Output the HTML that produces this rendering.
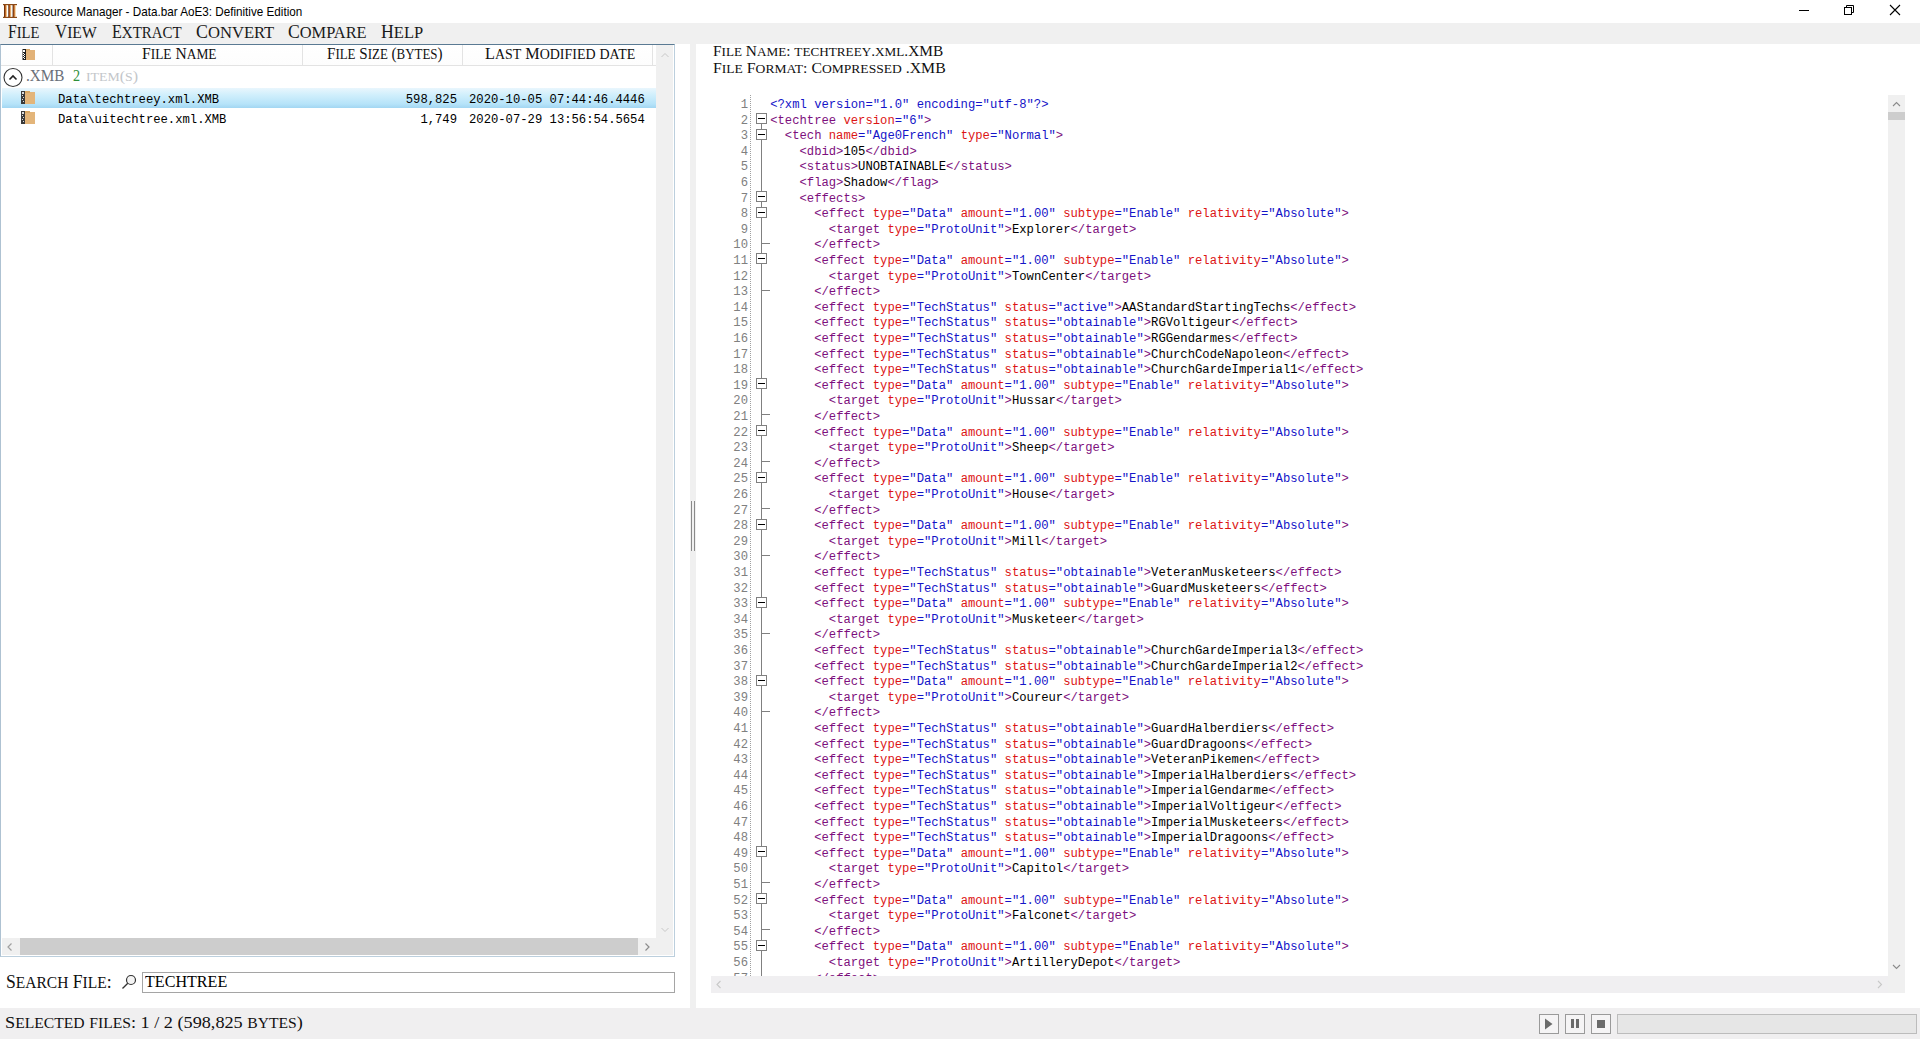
<!DOCTYPE html>
<html><head><meta charset="utf-8">
<style>
*{box-sizing:border-box}
html,body{margin:0;padding:0;width:1920px;height:1039px;overflow:hidden;background:#fff;position:relative}
.a{position:absolute}
.sc{font-family:"Liberation Serif",serif;font-variant:small-caps;color:#141414;white-space:nowrap}
.lb{white-space:nowrap;line-height:1;transform-origin:0 0}
.mono{font-family:"Liberation Mono",monospace;white-space:pre}
#title{left:23px;top:2px;font-family:"Liberation Sans",sans-serif;font-size:12px;line-height:18px;color:#000;white-space:nowrap}
#menu{left:0;top:23px;width:1920px;height:21px;background:#f0f0f0}
.mi{position:absolute;top:0;font-size:17px;line-height:22px}
#lv{left:0;top:44px;width:675px;height:913px;border:1px solid #bccfdd;border-left-color:#aec2d2;border-top-color:#5a7a93;background:#fff}
.hd{position:absolute;top:0;height:21px;border-bottom:1px solid #e3e3e3}
.hdiv{position:absolute;top:0;width:1px;height:20px;background:#e3e3e3}
.ht{position:absolute;top:0;font-size:15px;line-height:20px;text-align:center}
.sb{background:#f0f0f0}
.row{position:absolute;left:1px;width:654px;height:20px}
.rt{position:absolute;top:0;font-size:12.21px;line-height:20px;color:#000}
#editor{left:711px;top:95px;width:1177px;height:881px;overflow:hidden}
.cl{position:absolute;left:0;font-family:"Liberation Mono",monospace;font-size:12.21px;line-height:15.636px;white-space:pre;height:15.636px}
.ln{position:absolute;left:0;width:37px;text-align:right;font-family:"Liberation Mono",monospace;font-size:12.21px;line-height:15.636px;color:#808080;height:15.636px}
</style></head><body>
<!-- title bar -->
<svg class="a" style="left:3px;top:4px" width="14" height="14" viewBox="0 0 14 14">
 <defs><linearGradient id="g1" x1="0" x2="1"><stop offset="0" stop-color="#4a1e04"/><stop offset="0.45" stop-color="#b85a18"/><stop offset="0.75" stop-color="#e8b070"/><stop offset="1" stop-color="#f6e0b8"/></linearGradient></defs>
 <rect x="0" y="0" width="14" height="1.2" fill="#8a4a18"/>
 <rect x="0" y="12.8" width="14" height="1.2" fill="#8a4a18"/>
 <rect x="1" y="1" width="3" height="12" fill="url(#g1)"/>
 <rect x="5.3" y="1" width="3" height="12" fill="url(#g1)"/>
 <rect x="9.6" y="1" width="3.2" height="12" fill="url(#g1)"/>
</svg>
<svg class="a" style="left:1790px;top:0" width="130" height="22">
 <rect x="9" y="10" width="10" height="1" fill="#000"/>
 <rect x="54.5" y="7.5" width="7" height="7" fill="none" stroke="#000"/>
 <path d="M56.5 7.5V5.5H63.5V12.5H61.5" fill="none" stroke="#000"/>
 <path d="M100 5L110 15M110 5L100 15" stroke="#000" stroke-width="1.1"/>
</svg>
<!-- menu -->
<div id="menu" class="a">
</div>
<!-- list view -->
<div id="lv" class="a">
 <div class="hd" style="left:0;width:655px;background:linear-gradient(#fff,#fdfdfd)"></div>
 <div class="hdiv" style="left:51px"></div>
 <div class="hdiv" style="left:301px"></div>
 <div class="hdiv" style="left:461px"></div>
 <div class="hdiv" style="left:651px"></div>
 <svg class="a" style="left:21px;top:4px" width="13" height="12" viewBox="0 0 13 12">
  <rect x="4" y="1" width="9" height="10" fill="#e2b278"/>
  <rect x="4" y="0" width="4" height="1.5" fill="#d8a868"/>
  <rect x="0.5" y="0" width="3.5" height="11" fill="#1e1e1e"/>
  <rect x="1" y="1" width="2" height="2" fill="#fff"/>
  <rect x="1" y="4" width="1" height="1" fill="#fff"/><rect x="2" y="5" width="1" height="1" fill="#fff"/>
  <rect x="1" y="6" width="1" height="1" fill="#fff"/><rect x="2" y="7" width="1" height="1" fill="#fff"/>
  <rect x="1" y="8" width="1" height="1" fill="#fff"/><rect x="2" y="9" width="1" height="1" fill="#fff"/>
 </svg>
 <!-- group -->
 <svg class="a" style="left:2px;top:22px" width="22" height="22" viewBox="0 0 22 22">
  <circle cx="10" cy="10.5" r="9" fill="none" stroke="#333" stroke-width="1.1"/>
  <path d="M6.5 12.5L10 9L13.5 12.5" fill="none" stroke="#222" stroke-width="1.6"/>
 </svg>
 <!-- rows -->
 <div class="row" style="top:43px;background:linear-gradient(#e9f6fd,#d0effc 35%,#b6e3f9 80%,#a2d6f2)"></div>
 <svg class="a" style="left:19px;top:46px" width="16" height="14" viewBox="0 0 16 14">
  <rect x="5" y="1" width="10" height="12" fill="#e3b57a"/>
  <rect x="5" y="0" width="5" height="2" fill="#d9a866"/>
  <rect x="1" y="0" width="4" height="13" fill="#3a3a3a"/>
  <rect x="2" y="1" width="2" height="2" fill="#ddd"/>
  <rect x="2" y="4" width="1" height="1" fill="#ddd"/><rect x="3" y="6" width="1" height="1" fill="#ddd"/>
  <rect x="2" y="8" width="1" height="1" fill="#ddd"/><rect x="3" y="10" width="1" height="1" fill="#ddd"/>
 </svg>
 <div class="rt mono" style="left:57px;top:44.5px">Data\techtreey.xml.XMB</div>
 <div class="rt mono" style="left:396px;top:44.5px;width:60px;text-align:right">598,825</div>
 <div class="rt mono" style="left:468px;top:44.5px">2020-10-05 07:44:46.4446</div>
 <svg class="a" style="left:19px;top:66px" width="16" height="14" viewBox="0 0 16 14">
  <rect x="5" y="1" width="10" height="12" fill="#e3b57a"/>
  <rect x="5" y="0" width="5" height="2" fill="#d9a866"/>
  <rect x="1" y="0" width="4" height="13" fill="#3a3a3a"/>
  <rect x="2" y="1" width="2" height="2" fill="#ddd"/>
  <rect x="2" y="4" width="1" height="1" fill="#ddd"/><rect x="3" y="6" width="1" height="1" fill="#ddd"/>
  <rect x="2" y="8" width="1" height="1" fill="#ddd"/><rect x="3" y="10" width="1" height="1" fill="#ddd"/>
 </svg>
 <div class="rt mono" style="left:57px;top:64.5px">Data\uitechtree.xml.XMB</div>
 <div class="rt mono" style="left:396px;top:64.5px;width:60px;text-align:right">1,749</div>
 <div class="rt mono" style="left:468px;top:64.5px">2020-07-29 13:56:54.5654</div>
 <!-- v scrollbar -->
 <div class="a sb" style="left:655px;top:0;width:17px;height:893px"></div>
 <svg class="a" style="left:655px;top:0" width="18" height="893">
  <path d="M5.5 12L9 8.5L12.5 12" fill="none" stroke="#c8c8c8" stroke-width="1"/>
  <path d="M5.5 883L9 886.5L12.5 883" fill="none" stroke="#c8c8c8" stroke-width="1"/>
 </svg>
 <!-- h scrollbar -->
 <div class="a sb" style="left:1px;top:893px;width:671px;height:17px"></div>
 <div class="a" style="left:19px;top:893px;width:618px;height:17px;background:#cdcdcd"></div>
 <svg class="a" style="left:0;top:893px" width="673" height="18">
  <path d="M10.5 5.5L7 9L10.5 12.5" fill="none" stroke="#a0a0a0" stroke-width="1.2"/>
  <path d="M644.5 5.5L648 9L644.5 12.5" fill="none" stroke="#8c8c8c" stroke-width="1.2"/>
 </svg>
</div>
<!-- search -->
<svg class="a" style="left:120px;top:973px" width="18" height="18">
 <circle cx="11" cy="7" r="4.5" fill="#f4f4f4" stroke="#333" stroke-width="1.2"/>
 <path d="M7.8 10.2L2.5 15.5" stroke="#333" stroke-width="1.3"/>
</svg>
<div class="a" style="left:142px;top:972px;width:533px;height:21px;border:1px solid #a5a5a5;background:#fff"></div>
<!-- splitter -->
<div class="a" style="left:690px;top:44px;width:6px;height:964px;background:#f0f0f0"></div>
<div class="a" style="left:691px;top:501px;width:1px;height:50px;background:#8a8a8a"></div>
<div class="a" style="left:694px;top:501px;width:1px;height:50px;background:#8a8a8a"></div>
<!-- right panel labels -->
<!-- editor -->
<div id="editor" class="a">
 <div class="a" style="left:0;top:0;width:40px;height:881px">
<div class="ln" style="top:2.950px">1</div>
<div class="ln" style="top:18.550px">2</div>
<div class="ln" style="top:34.150px">3</div>
<div class="ln" style="top:49.750px">4</div>
<div class="ln" style="top:65.350px">5</div>
<div class="ln" style="top:80.950px">6</div>
<div class="ln" style="top:96.550px">7</div>
<div class="ln" style="top:112.150px">8</div>
<div class="ln" style="top:127.750px">9</div>
<div class="ln" style="top:143.350px">10</div>
<div class="ln" style="top:158.950px">11</div>
<div class="ln" style="top:174.550px">12</div>
<div class="ln" style="top:190.150px">13</div>
<div class="ln" style="top:205.750px">14</div>
<div class="ln" style="top:221.350px">15</div>
<div class="ln" style="top:236.950px">16</div>
<div class="ln" style="top:252.550px">17</div>
<div class="ln" style="top:268.150px">18</div>
<div class="ln" style="top:283.750px">19</div>
<div class="ln" style="top:299.350px">20</div>
<div class="ln" style="top:314.950px">21</div>
<div class="ln" style="top:330.550px">22</div>
<div class="ln" style="top:346.150px">23</div>
<div class="ln" style="top:361.750px">24</div>
<div class="ln" style="top:377.350px">25</div>
<div class="ln" style="top:392.950px">26</div>
<div class="ln" style="top:408.550px">27</div>
<div class="ln" style="top:424.150px">28</div>
<div class="ln" style="top:439.750px">29</div>
<div class="ln" style="top:455.350px">30</div>
<div class="ln" style="top:470.950px">31</div>
<div class="ln" style="top:486.550px">32</div>
<div class="ln" style="top:502.150px">33</div>
<div class="ln" style="top:517.750px">34</div>
<div class="ln" style="top:533.350px">35</div>
<div class="ln" style="top:548.950px">36</div>
<div class="ln" style="top:564.550px">37</div>
<div class="ln" style="top:580.150px">38</div>
<div class="ln" style="top:595.750px">39</div>
<div class="ln" style="top:611.350px">40</div>
<div class="ln" style="top:626.950px">41</div>
<div class="ln" style="top:642.550px">42</div>
<div class="ln" style="top:658.150px">43</div>
<div class="ln" style="top:673.750px">44</div>
<div class="ln" style="top:689.350px">45</div>
<div class="ln" style="top:704.950px">46</div>
<div class="ln" style="top:720.550px">47</div>
<div class="ln" style="top:736.150px">48</div>
<div class="ln" style="top:751.750px">49</div>
<div class="ln" style="top:767.350px">50</div>
<div class="ln" style="top:782.950px">51</div>
<div class="ln" style="top:798.550px">52</div>
<div class="ln" style="top:814.150px">53</div>
<div class="ln" style="top:829.750px">54</div>
<div class="ln" style="top:845.350px">55</div>
<div class="ln" style="top:860.950px">56</div>
<div class="ln" style="top:876.550px">57</div>
 </div>
 <svg class="a" style="left:39px;top:0" width="1" height="881"><line x1="0.5" y1="0" x2="0.5" y2="881" stroke="#a0a0a0" stroke-dasharray="1 1"/></svg>
 <svg class="a" style="left:45px;top:0" width="16" height="881">
<rect x="5" y="29" width="1" height="854.0" fill="#808080"/>
<rect x="0.5" y="18.5" width="10" height="10" fill="#fff" stroke="#808080"/>
<rect x="2" y="23" width="7" height="1" fill="#000"/>
<rect x="0.5" y="34.5" width="10" height="10" fill="#fff" stroke="#808080"/>
<rect x="2" y="39" width="7" height="1" fill="#000"/>
<rect x="0.5" y="96.5" width="10" height="10" fill="#fff" stroke="#808080"/>
<rect x="2" y="101" width="7" height="1" fill="#000"/>
<rect x="0.5" y="112.5" width="10" height="10" fill="#fff" stroke="#808080"/>
<rect x="2" y="117" width="7" height="1" fill="#000"/>
<rect x="6" y="148" width="8" height="1" fill="#808080"/>
<rect x="0.5" y="158.5" width="10" height="10" fill="#fff" stroke="#808080"/>
<rect x="2" y="163" width="7" height="1" fill="#000"/>
<rect x="6" y="195" width="8" height="1" fill="#808080"/>
<rect x="0.5" y="283.5" width="10" height="10" fill="#fff" stroke="#808080"/>
<rect x="2" y="288" width="7" height="1" fill="#000"/>
<rect x="6" y="319" width="8" height="1" fill="#808080"/>
<rect x="0.5" y="330.5" width="10" height="10" fill="#fff" stroke="#808080"/>
<rect x="2" y="335" width="7" height="1" fill="#000"/>
<rect x="6" y="366" width="8" height="1" fill="#808080"/>
<rect x="0.5" y="377.5" width="10" height="10" fill="#fff" stroke="#808080"/>
<rect x="2" y="382" width="7" height="1" fill="#000"/>
<rect x="6" y="413" width="8" height="1" fill="#808080"/>
<rect x="0.5" y="424.5" width="10" height="10" fill="#fff" stroke="#808080"/>
<rect x="2" y="429" width="7" height="1" fill="#000"/>
<rect x="6" y="460" width="8" height="1" fill="#808080"/>
<rect x="0.5" y="502.5" width="10" height="10" fill="#fff" stroke="#808080"/>
<rect x="2" y="507" width="7" height="1" fill="#000"/>
<rect x="6" y="538" width="8" height="1" fill="#808080"/>
<rect x="0.5" y="580.5" width="10" height="10" fill="#fff" stroke="#808080"/>
<rect x="2" y="585" width="7" height="1" fill="#000"/>
<rect x="6" y="616" width="8" height="1" fill="#808080"/>
<rect x="0.5" y="751.5" width="10" height="10" fill="#fff" stroke="#808080"/>
<rect x="2" y="756" width="7" height="1" fill="#000"/>
<rect x="6" y="787" width="8" height="1" fill="#808080"/>
<rect x="0.5" y="798.5" width="10" height="10" fill="#fff" stroke="#808080"/>
<rect x="2" y="803" width="7" height="1" fill="#000"/>
<rect x="6" y="834" width="8" height="1" fill="#808080"/>
<rect x="0.5" y="845.5" width="10" height="10" fill="#fff" stroke="#808080"/>
<rect x="2" y="850" width="7" height="1" fill="#000"/>
<rect x="6" y="881" width="8" height="1" fill="#808080"/>
 </svg>
 <div class="a" style="left:59.2px;top:0;width:1118px;height:881px">
<div class="cl" style="top:2.950px;left:0.00px"><span style="color:#1414c8">&lt;?xml version="1.0" encoding="utf-8"?&gt;</span></div>
<div class="cl" style="top:18.550px;left:0.00px"><span style="color:#7d0f7d">&lt;techtree</span> <span style="color:#dc1414">version</span><span style="color:#1414c8">="6"</span><span style="color:#7d0f7d">&gt;</span></div>
<div class="cl" style="top:34.150px;left:14.66px"><span style="color:#7d0f7d">&lt;tech</span> <span style="color:#dc1414">name</span><span style="color:#1414c8">="Age0French"</span> <span style="color:#dc1414">type</span><span style="color:#1414c8">="Normal"</span><span style="color:#7d0f7d">&gt;</span></div>
<div class="cl" style="top:49.750px;left:29.32px"><span style="color:#7d0f7d">&lt;dbid&gt;</span><span style="color:#000000">105</span><span style="color:#7d0f7d">&lt;/dbid&gt;</span></div>
<div class="cl" style="top:65.350px;left:29.32px"><span style="color:#7d0f7d">&lt;status&gt;</span><span style="color:#000000">UNOBTAINABLE</span><span style="color:#7d0f7d">&lt;/status&gt;</span></div>
<div class="cl" style="top:80.950px;left:29.32px"><span style="color:#7d0f7d">&lt;flag&gt;</span><span style="color:#000000">Shadow</span><span style="color:#7d0f7d">&lt;/flag&gt;</span></div>
<div class="cl" style="top:96.550px;left:29.32px"><span style="color:#7d0f7d">&lt;effects&gt;</span></div>
<div class="cl" style="top:112.150px;left:43.98px"><span style="color:#7d0f7d">&lt;effect</span> <span style="color:#dc1414">type</span><span style="color:#1414c8">="Data"</span> <span style="color:#dc1414">amount</span><span style="color:#1414c8">="1.00"</span> <span style="color:#dc1414">subtype</span><span style="color:#1414c8">="Enable"</span> <span style="color:#dc1414">relativity</span><span style="color:#1414c8">="Absolute"</span><span style="color:#7d0f7d">&gt;</span></div>
<div class="cl" style="top:127.750px;left:58.64px"><span style="color:#7d0f7d">&lt;target</span> <span style="color:#dc1414">type</span><span style="color:#1414c8">="ProtoUnit"</span><span style="color:#7d0f7d">&gt;</span><span style="color:#000000">Explorer</span><span style="color:#7d0f7d">&lt;/target&gt;</span></div>
<div class="cl" style="top:143.350px;left:43.98px"><span style="color:#7d0f7d">&lt;/effect&gt;</span></div>
<div class="cl" style="top:158.950px;left:43.98px"><span style="color:#7d0f7d">&lt;effect</span> <span style="color:#dc1414">type</span><span style="color:#1414c8">="Data"</span> <span style="color:#dc1414">amount</span><span style="color:#1414c8">="1.00"</span> <span style="color:#dc1414">subtype</span><span style="color:#1414c8">="Enable"</span> <span style="color:#dc1414">relativity</span><span style="color:#1414c8">="Absolute"</span><span style="color:#7d0f7d">&gt;</span></div>
<div class="cl" style="top:174.550px;left:58.64px"><span style="color:#7d0f7d">&lt;target</span> <span style="color:#dc1414">type</span><span style="color:#1414c8">="ProtoUnit"</span><span style="color:#7d0f7d">&gt;</span><span style="color:#000000">TownCenter</span><span style="color:#7d0f7d">&lt;/target&gt;</span></div>
<div class="cl" style="top:190.150px;left:43.98px"><span style="color:#7d0f7d">&lt;/effect&gt;</span></div>
<div class="cl" style="top:205.750px;left:43.98px"><span style="color:#7d0f7d">&lt;effect</span> <span style="color:#dc1414">type</span><span style="color:#1414c8">="TechStatus"</span> <span style="color:#dc1414">status</span><span style="color:#1414c8">="active"</span><span style="color:#7d0f7d">&gt;</span><span style="color:#000000">AAStandardStartingTechs</span><span style="color:#7d0f7d">&lt;/effect&gt;</span></div>
<div class="cl" style="top:221.350px;left:43.98px"><span style="color:#7d0f7d">&lt;effect</span> <span style="color:#dc1414">type</span><span style="color:#1414c8">="TechStatus"</span> <span style="color:#dc1414">status</span><span style="color:#1414c8">="obtainable"</span><span style="color:#7d0f7d">&gt;</span><span style="color:#000000">RGVoltigeur</span><span style="color:#7d0f7d">&lt;/effect&gt;</span></div>
<div class="cl" style="top:236.950px;left:43.98px"><span style="color:#7d0f7d">&lt;effect</span> <span style="color:#dc1414">type</span><span style="color:#1414c8">="TechStatus"</span> <span style="color:#dc1414">status</span><span style="color:#1414c8">="obtainable"</span><span style="color:#7d0f7d">&gt;</span><span style="color:#000000">RGGendarmes</span><span style="color:#7d0f7d">&lt;/effect&gt;</span></div>
<div class="cl" style="top:252.550px;left:43.98px"><span style="color:#7d0f7d">&lt;effect</span> <span style="color:#dc1414">type</span><span style="color:#1414c8">="TechStatus"</span> <span style="color:#dc1414">status</span><span style="color:#1414c8">="obtainable"</span><span style="color:#7d0f7d">&gt;</span><span style="color:#000000">ChurchCodeNapoleon</span><span style="color:#7d0f7d">&lt;/effect&gt;</span></div>
<div class="cl" style="top:268.150px;left:43.98px"><span style="color:#7d0f7d">&lt;effect</span> <span style="color:#dc1414">type</span><span style="color:#1414c8">="TechStatus"</span> <span style="color:#dc1414">status</span><span style="color:#1414c8">="obtainable"</span><span style="color:#7d0f7d">&gt;</span><span style="color:#000000">ChurchGardeImperial1</span><span style="color:#7d0f7d">&lt;/effect&gt;</span></div>
<div class="cl" style="top:283.750px;left:43.98px"><span style="color:#7d0f7d">&lt;effect</span> <span style="color:#dc1414">type</span><span style="color:#1414c8">="Data"</span> <span style="color:#dc1414">amount</span><span style="color:#1414c8">="1.00"</span> <span style="color:#dc1414">subtype</span><span style="color:#1414c8">="Enable"</span> <span style="color:#dc1414">relativity</span><span style="color:#1414c8">="Absolute"</span><span style="color:#7d0f7d">&gt;</span></div>
<div class="cl" style="top:299.350px;left:58.64px"><span style="color:#7d0f7d">&lt;target</span> <span style="color:#dc1414">type</span><span style="color:#1414c8">="ProtoUnit"</span><span style="color:#7d0f7d">&gt;</span><span style="color:#000000">Hussar</span><span style="color:#7d0f7d">&lt;/target&gt;</span></div>
<div class="cl" style="top:314.950px;left:43.98px"><span style="color:#7d0f7d">&lt;/effect&gt;</span></div>
<div class="cl" style="top:330.550px;left:43.98px"><span style="color:#7d0f7d">&lt;effect</span> <span style="color:#dc1414">type</span><span style="color:#1414c8">="Data"</span> <span style="color:#dc1414">amount</span><span style="color:#1414c8">="1.00"</span> <span style="color:#dc1414">subtype</span><span style="color:#1414c8">="Enable"</span> <span style="color:#dc1414">relativity</span><span style="color:#1414c8">="Absolute"</span><span style="color:#7d0f7d">&gt;</span></div>
<div class="cl" style="top:346.150px;left:58.64px"><span style="color:#7d0f7d">&lt;target</span> <span style="color:#dc1414">type</span><span style="color:#1414c8">="ProtoUnit"</span><span style="color:#7d0f7d">&gt;</span><span style="color:#000000">Sheep</span><span style="color:#7d0f7d">&lt;/target&gt;</span></div>
<div class="cl" style="top:361.750px;left:43.98px"><span style="color:#7d0f7d">&lt;/effect&gt;</span></div>
<div class="cl" style="top:377.350px;left:43.98px"><span style="color:#7d0f7d">&lt;effect</span> <span style="color:#dc1414">type</span><span style="color:#1414c8">="Data"</span> <span style="color:#dc1414">amount</span><span style="color:#1414c8">="1.00"</span> <span style="color:#dc1414">subtype</span><span style="color:#1414c8">="Enable"</span> <span style="color:#dc1414">relativity</span><span style="color:#1414c8">="Absolute"</span><span style="color:#7d0f7d">&gt;</span></div>
<div class="cl" style="top:392.950px;left:58.64px"><span style="color:#7d0f7d">&lt;target</span> <span style="color:#dc1414">type</span><span style="color:#1414c8">="ProtoUnit"</span><span style="color:#7d0f7d">&gt;</span><span style="color:#000000">House</span><span style="color:#7d0f7d">&lt;/target&gt;</span></div>
<div class="cl" style="top:408.550px;left:43.98px"><span style="color:#7d0f7d">&lt;/effect&gt;</span></div>
<div class="cl" style="top:424.150px;left:43.98px"><span style="color:#7d0f7d">&lt;effect</span> <span style="color:#dc1414">type</span><span style="color:#1414c8">="Data"</span> <span style="color:#dc1414">amount</span><span style="color:#1414c8">="1.00"</span> <span style="color:#dc1414">subtype</span><span style="color:#1414c8">="Enable"</span> <span style="color:#dc1414">relativity</span><span style="color:#1414c8">="Absolute"</span><span style="color:#7d0f7d">&gt;</span></div>
<div class="cl" style="top:439.750px;left:58.64px"><span style="color:#7d0f7d">&lt;target</span> <span style="color:#dc1414">type</span><span style="color:#1414c8">="ProtoUnit"</span><span style="color:#7d0f7d">&gt;</span><span style="color:#000000">Mill</span><span style="color:#7d0f7d">&lt;/target&gt;</span></div>
<div class="cl" style="top:455.350px;left:43.98px"><span style="color:#7d0f7d">&lt;/effect&gt;</span></div>
<div class="cl" style="top:470.950px;left:43.98px"><span style="color:#7d0f7d">&lt;effect</span> <span style="color:#dc1414">type</span><span style="color:#1414c8">="TechStatus"</span> <span style="color:#dc1414">status</span><span style="color:#1414c8">="obtainable"</span><span style="color:#7d0f7d">&gt;</span><span style="color:#000000">VeteranMusketeers</span><span style="color:#7d0f7d">&lt;/effect&gt;</span></div>
<div class="cl" style="top:486.550px;left:43.98px"><span style="color:#7d0f7d">&lt;effect</span> <span style="color:#dc1414">type</span><span style="color:#1414c8">="TechStatus"</span> <span style="color:#dc1414">status</span><span style="color:#1414c8">="obtainable"</span><span style="color:#7d0f7d">&gt;</span><span style="color:#000000">GuardMusketeers</span><span style="color:#7d0f7d">&lt;/effect&gt;</span></div>
<div class="cl" style="top:502.150px;left:43.98px"><span style="color:#7d0f7d">&lt;effect</span> <span style="color:#dc1414">type</span><span style="color:#1414c8">="Data"</span> <span style="color:#dc1414">amount</span><span style="color:#1414c8">="1.00"</span> <span style="color:#dc1414">subtype</span><span style="color:#1414c8">="Enable"</span> <span style="color:#dc1414">relativity</span><span style="color:#1414c8">="Absolute"</span><span style="color:#7d0f7d">&gt;</span></div>
<div class="cl" style="top:517.750px;left:58.64px"><span style="color:#7d0f7d">&lt;target</span> <span style="color:#dc1414">type</span><span style="color:#1414c8">="ProtoUnit"</span><span style="color:#7d0f7d">&gt;</span><span style="color:#000000">Musketeer</span><span style="color:#7d0f7d">&lt;/target&gt;</span></div>
<div class="cl" style="top:533.350px;left:43.98px"><span style="color:#7d0f7d">&lt;/effect&gt;</span></div>
<div class="cl" style="top:548.950px;left:43.98px"><span style="color:#7d0f7d">&lt;effect</span> <span style="color:#dc1414">type</span><span style="color:#1414c8">="TechStatus"</span> <span style="color:#dc1414">status</span><span style="color:#1414c8">="obtainable"</span><span style="color:#7d0f7d">&gt;</span><span style="color:#000000">ChurchGardeImperial3</span><span style="color:#7d0f7d">&lt;/effect&gt;</span></div>
<div class="cl" style="top:564.550px;left:43.98px"><span style="color:#7d0f7d">&lt;effect</span> <span style="color:#dc1414">type</span><span style="color:#1414c8">="TechStatus"</span> <span style="color:#dc1414">status</span><span style="color:#1414c8">="obtainable"</span><span style="color:#7d0f7d">&gt;</span><span style="color:#000000">ChurchGardeImperial2</span><span style="color:#7d0f7d">&lt;/effect&gt;</span></div>
<div class="cl" style="top:580.150px;left:43.98px"><span style="color:#7d0f7d">&lt;effect</span> <span style="color:#dc1414">type</span><span style="color:#1414c8">="Data"</span> <span style="color:#dc1414">amount</span><span style="color:#1414c8">="1.00"</span> <span style="color:#dc1414">subtype</span><span style="color:#1414c8">="Enable"</span> <span style="color:#dc1414">relativity</span><span style="color:#1414c8">="Absolute"</span><span style="color:#7d0f7d">&gt;</span></div>
<div class="cl" style="top:595.750px;left:58.64px"><span style="color:#7d0f7d">&lt;target</span> <span style="color:#dc1414">type</span><span style="color:#1414c8">="ProtoUnit"</span><span style="color:#7d0f7d">&gt;</span><span style="color:#000000">Coureur</span><span style="color:#7d0f7d">&lt;/target&gt;</span></div>
<div class="cl" style="top:611.350px;left:43.98px"><span style="color:#7d0f7d">&lt;/effect&gt;</span></div>
<div class="cl" style="top:626.950px;left:43.98px"><span style="color:#7d0f7d">&lt;effect</span> <span style="color:#dc1414">type</span><span style="color:#1414c8">="TechStatus"</span> <span style="color:#dc1414">status</span><span style="color:#1414c8">="obtainable"</span><span style="color:#7d0f7d">&gt;</span><span style="color:#000000">GuardHalberdiers</span><span style="color:#7d0f7d">&lt;/effect&gt;</span></div>
<div class="cl" style="top:642.550px;left:43.98px"><span style="color:#7d0f7d">&lt;effect</span> <span style="color:#dc1414">type</span><span style="color:#1414c8">="TechStatus"</span> <span style="color:#dc1414">status</span><span style="color:#1414c8">="obtainable"</span><span style="color:#7d0f7d">&gt;</span><span style="color:#000000">GuardDragoons</span><span style="color:#7d0f7d">&lt;/effect&gt;</span></div>
<div class="cl" style="top:658.150px;left:43.98px"><span style="color:#7d0f7d">&lt;effect</span> <span style="color:#dc1414">type</span><span style="color:#1414c8">="TechStatus"</span> <span style="color:#dc1414">status</span><span style="color:#1414c8">="obtainable"</span><span style="color:#7d0f7d">&gt;</span><span style="color:#000000">VeteranPikemen</span><span style="color:#7d0f7d">&lt;/effect&gt;</span></div>
<div class="cl" style="top:673.750px;left:43.98px"><span style="color:#7d0f7d">&lt;effect</span> <span style="color:#dc1414">type</span><span style="color:#1414c8">="TechStatus"</span> <span style="color:#dc1414">status</span><span style="color:#1414c8">="obtainable"</span><span style="color:#7d0f7d">&gt;</span><span style="color:#000000">ImperialHalberdiers</span><span style="color:#7d0f7d">&lt;/effect&gt;</span></div>
<div class="cl" style="top:689.350px;left:43.98px"><span style="color:#7d0f7d">&lt;effect</span> <span style="color:#dc1414">type</span><span style="color:#1414c8">="TechStatus"</span> <span style="color:#dc1414">status</span><span style="color:#1414c8">="obtainable"</span><span style="color:#7d0f7d">&gt;</span><span style="color:#000000">ImperialGendarme</span><span style="color:#7d0f7d">&lt;/effect&gt;</span></div>
<div class="cl" style="top:704.950px;left:43.98px"><span style="color:#7d0f7d">&lt;effect</span> <span style="color:#dc1414">type</span><span style="color:#1414c8">="TechStatus"</span> <span style="color:#dc1414">status</span><span style="color:#1414c8">="obtainable"</span><span style="color:#7d0f7d">&gt;</span><span style="color:#000000">ImperialVoltigeur</span><span style="color:#7d0f7d">&lt;/effect&gt;</span></div>
<div class="cl" style="top:720.550px;left:43.98px"><span style="color:#7d0f7d">&lt;effect</span> <span style="color:#dc1414">type</span><span style="color:#1414c8">="TechStatus"</span> <span style="color:#dc1414">status</span><span style="color:#1414c8">="obtainable"</span><span style="color:#7d0f7d">&gt;</span><span style="color:#000000">ImperialMusketeers</span><span style="color:#7d0f7d">&lt;/effect&gt;</span></div>
<div class="cl" style="top:736.150px;left:43.98px"><span style="color:#7d0f7d">&lt;effect</span> <span style="color:#dc1414">type</span><span style="color:#1414c8">="TechStatus"</span> <span style="color:#dc1414">status</span><span style="color:#1414c8">="obtainable"</span><span style="color:#7d0f7d">&gt;</span><span style="color:#000000">ImperialDragoons</span><span style="color:#7d0f7d">&lt;/effect&gt;</span></div>
<div class="cl" style="top:751.750px;left:43.98px"><span style="color:#7d0f7d">&lt;effect</span> <span style="color:#dc1414">type</span><span style="color:#1414c8">="Data"</span> <span style="color:#dc1414">amount</span><span style="color:#1414c8">="1.00"</span> <span style="color:#dc1414">subtype</span><span style="color:#1414c8">="Enable"</span> <span style="color:#dc1414">relativity</span><span style="color:#1414c8">="Absolute"</span><span style="color:#7d0f7d">&gt;</span></div>
<div class="cl" style="top:767.350px;left:58.64px"><span style="color:#7d0f7d">&lt;target</span> <span style="color:#dc1414">type</span><span style="color:#1414c8">="ProtoUnit"</span><span style="color:#7d0f7d">&gt;</span><span style="color:#000000">Capitol</span><span style="color:#7d0f7d">&lt;/target&gt;</span></div>
<div class="cl" style="top:782.950px;left:43.98px"><span style="color:#7d0f7d">&lt;/effect&gt;</span></div>
<div class="cl" style="top:798.550px;left:43.98px"><span style="color:#7d0f7d">&lt;effect</span> <span style="color:#dc1414">type</span><span style="color:#1414c8">="Data"</span> <span style="color:#dc1414">amount</span><span style="color:#1414c8">="1.00"</span> <span style="color:#dc1414">subtype</span><span style="color:#1414c8">="Enable"</span> <span style="color:#dc1414">relativity</span><span style="color:#1414c8">="Absolute"</span><span style="color:#7d0f7d">&gt;</span></div>
<div class="cl" style="top:814.150px;left:58.64px"><span style="color:#7d0f7d">&lt;target</span> <span style="color:#dc1414">type</span><span style="color:#1414c8">="ProtoUnit"</span><span style="color:#7d0f7d">&gt;</span><span style="color:#000000">Falconet</span><span style="color:#7d0f7d">&lt;/target&gt;</span></div>
<div class="cl" style="top:829.750px;left:43.98px"><span style="color:#7d0f7d">&lt;/effect&gt;</span></div>
<div class="cl" style="top:845.350px;left:43.98px"><span style="color:#7d0f7d">&lt;effect</span> <span style="color:#dc1414">type</span><span style="color:#1414c8">="Data"</span> <span style="color:#dc1414">amount</span><span style="color:#1414c8">="1.00"</span> <span style="color:#dc1414">subtype</span><span style="color:#1414c8">="Enable"</span> <span style="color:#dc1414">relativity</span><span style="color:#1414c8">="Absolute"</span><span style="color:#7d0f7d">&gt;</span></div>
<div class="cl" style="top:860.950px;left:58.64px"><span style="color:#7d0f7d">&lt;target</span> <span style="color:#dc1414">type</span><span style="color:#1414c8">="ProtoUnit"</span><span style="color:#7d0f7d">&gt;</span><span style="color:#000000">ArtilleryDepot</span><span style="color:#7d0f7d">&lt;/target&gt;</span></div>
<div class="cl" style="top:876.550px;left:43.98px"><span style="color:#7d0f7d">&lt;/effect&gt;</span></div>
 </div>
</div>
<!-- editor scrollbars -->
<div class="a sb" style="left:1888px;top:95px;width:17px;height:898px"></div>
<div class="a" style="left:1888px;top:112px;width:17px;height:8px;background:#cdcdcd"></div>
<svg class="a" style="left:1888px;top:95px" width="17" height="881">
 <path d="M5 11L8.5 7.5L12 11" fill="none" stroke="#8a8a8a" stroke-width="1.1"/>
 <path d="M5 870L8.5 873.5L12 870" fill="none" stroke="#8a8a8a" stroke-width="1.1"/>
</svg>
<div class="a" style="left:711px;top:976px;width:1177px;height:17px;background:#f0eff1"></div>
<svg class="a" style="left:711px;top:976px" width="1194" height="17">
 <path d="M9.5 5L6 8.5L9.5 12" fill="none" stroke="#c8c8c8" stroke-width="1.1"/>
 <path d="M1167 5L1170.5 8.5L1167 12" fill="none" stroke="#c8c8c8" stroke-width="1.1"/>
</svg>
<!-- status bar -->
<div class="a" style="left:0;top:1008px;width:1920px;height:31px;background:#f0eff0"></div>
<svg class="a" style="left:1539px;top:1014px" width="80" height="20">
 <rect x="0.5" y="0.5" width="19" height="19" fill="#f5f4f5" stroke="#9a9a9a"/>
 <path d="M6 4.5L13.5 10L6 15.5Z" fill="#6b6b6b"/>
 <rect x="26.5" y="0.5" width="19" height="19" fill="#f5f4f5" stroke="#9a9a9a"/>
 <rect x="32" y="5" width="3" height="9" fill="#6b6b6b"/><rect x="37" y="5" width="3" height="9" fill="#6b6b6b"/>
 <rect x="52.5" y="0.5" width="19" height="19" fill="#f5f4f5" stroke="#9a9a9a"/>
 <rect x="58" y="6" width="8" height="8" fill="#6b6b6b"/>
</svg>
<div class="a" style="left:1617px;top:1014px;width:300px;height:20px;background:#e6e6e6;border:1px solid #bcbcbc"></div>
<!-- labels -->
<div class="a lb" style="left:8.34px;top:23.00px;font-family:'Liberation Serif',serif;font-size:18.33px;color:#1a1a1a;transform:scaleX(0.8571)">F<span style="font-size:93%">ILE</span></div>
<div class="a lb" style="left:55.00px;top:23.00px;font-family:'Liberation Serif',serif;font-size:18.33px;color:#1a1a1a;transform:scaleX(0.9167)">V<span style="font-size:93%">IEW</span></div>
<div class="a lb" style="left:111.52px;top:23.00px;font-family:'Liberation Serif',serif;font-size:18.33px;color:#1a1a1a;transform:scaleX(0.8785)">E<span style="font-size:93%">XTRACT</span></div>
<div class="a lb" style="left:195.53px;top:23.00px;font-family:'Liberation Serif',serif;font-size:18.33px;color:#1a1a1a;transform:scaleX(0.9747)">C<span style="font-size:93%">ONVERT</span></div>
<div class="a lb" style="left:287.64px;top:23.00px;font-family:'Liberation Serif',serif;font-size:18.33px;color:#1a1a1a;transform:scaleX(0.9625)">C<span style="font-size:93%">OMPARE</span></div>
<div class="a lb" style="left:380.63px;top:23.00px;font-family:'Liberation Serif',serif;font-size:18.33px;color:#1a1a1a;transform:scaleX(0.9690)">H<span style="font-size:93%">ELP</span></div>
<div class="a lb" style="left:141.70px;top:45.80px;font-family:'Liberation Serif',serif;font-size:16.19px;color:#101010;transform:scaleX(0.9636)">F<span style="font-size:86%">ILE</span> N<span style="font-size:86%">AME</span></div>
<div class="a lb" style="left:326.60px;top:46.00px;font-family:'Liberation Serif',serif;font-size:16.19px;color:#101010;transform:scaleX(0.9306)">F<span style="font-size:86%">ILE</span> S<span style="font-size:86%">IZE</span> (<span style="font-size:86%">BYTES</span>)</div>
<div class="a lb" style="left:484.50px;top:46.00px;font-family:'Liberation Serif',serif;font-size:16.49px;color:#101010;transform:scaleX(0.9836)">L<span style="font-size:86%">AST</span> M<span style="font-size:86%">ODIFIED</span> <span style="font-size:86%">DATE</span></div>
<div class="a lb" style="left:26.05px;top:67.80px;font-family:'Liberation Serif',serif;font-size:16.04px;color:#6b7079;transform:scaleX(0.9487)">.XMB</div>
<div class="a lb" style="left:73.40px;top:67.80px;font-family:'Liberation Serif',serif;font-size:16.04px;color:#2f8f3a;transform:scaleX(0.8875)">2</div>
<div class="a lb" style="left:85.65px;top:67.80px;font-family:'Liberation Serif',serif;font-size:15.27px;color:#c3c6ca;transform:scaleX(1.0500)"><span style="font-size:86%">ITEM</span>(<span style="font-size:86%">S</span>)</div>
<div class="a lb" style="left:712.90px;top:42.60px;font-family:'Liberation Serif',serif;font-size:15.58px;color:#101010;transform:scaleX(0.9850)">F<span style="font-size:86%">ILE</span> N<span style="font-size:86%">AME</span>: <span style="font-size:86%">TECHTREEY</span>.<span style="font-size:86%">XML</span>.XMB</div>
<div class="a lb" style="left:712.90px;top:59.50px;font-family:'Liberation Serif',serif;font-size:15.58px;color:#101010;transform:scaleX(1.0135)">F<span style="font-size:86%">ILE</span> F<span style="font-size:86%">ORMAT</span>: C<span style="font-size:86%">OMPRESSED</span> .XMB</div>
<div class="a lb" style="left:5.61px;top:973.90px;font-family:'Liberation Serif',serif;font-size:17.87px;color:#101010;transform:scaleX(0.9867)">S<span style="font-size:88%">EARCH</span> F<span style="font-size:88%">ILE</span>:</div>
<div class="a lb" style="left:145.00px;top:974.10px;font-family:'Liberation Serif',serif;font-size:16.65px;color:#000000;transform:scaleX(0.9673)">TECHTREE</div>
<div class="a lb" style="left:4.75px;top:1013.70px;font-family:'Liberation Serif',serif;font-size:17.41px;color:#101010;transform:scaleX(1.0456)">S<span style="font-size:86%">ELECTED</span> <span style="font-size:86%">FILES</span>: 1 / 2 (598,825 <span style="font-size:86%">BYTES</span>)</div>
<div class="a lb" style="left:22.52px;top:6.60px;font-family:'Liberation Sans',sans-serif;font-size:11.92px;color:#000000;transform:scaleX(0.9814)">Resource Manager - Data.bar AoE3: Definitive Edition</div>
</body></html>
